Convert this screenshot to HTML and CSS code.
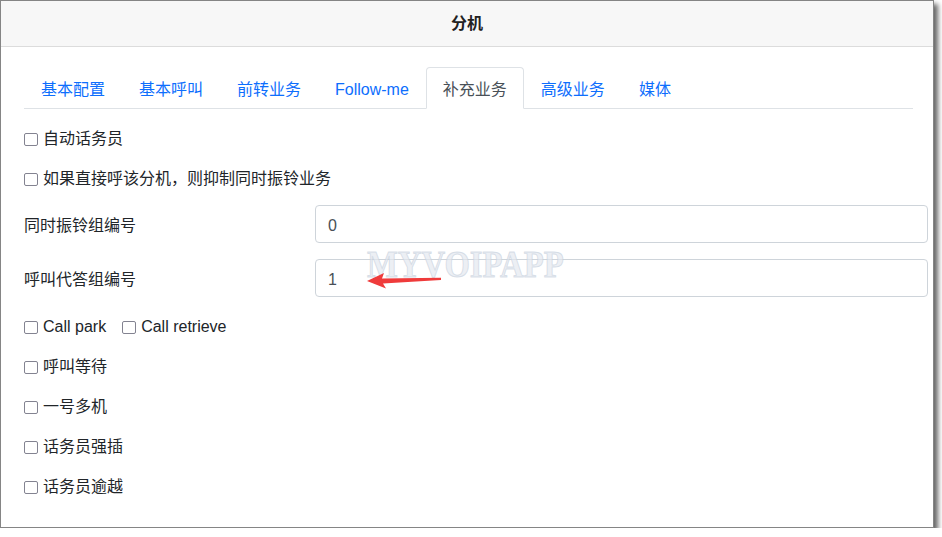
FILE: index.html
```
<!DOCTYPE html>
<html lang="zh-CN">
<head>
<meta charset="utf-8">
<title>分机</title>
<link rel="stylesheet" href="styles.css">
</head>
<body>
<div class="modal">
  <div class="modal-header"><h5 class="modal-title">分机</h5></div>
  <div class="modal-body">
    <ul class="tabs">
      <li><a class="tab">基本配置</a></li>
      <li><a class="tab">基本呼叫</a></li>
      <li><a class="tab">前转业务</a></li>
      <li><a class="tab">Follow-me</a></li>
      <li><a class="tab active">补充业务</a></li>
      <li><a class="tab">高级业务</a></li>
      <li><a class="tab">媒体</a></li>
    </ul>
    <div class="tab-content">
      <div class="check-row"><label class="check"><span class="box"></span>自动话务员</label></div>
      <div class="check-row"><label class="check"><span class="box"></span>如果直接呼该分机，则抑制同时振铃业务</label></div>
      <div class="form-row first">
        <label class="form-label">同时振铃组编号</label>
        <div class="field"><input class="form-control" type="text" value="0"></div>
      </div>
      <div class="form-row second">
        <label class="form-label">呼叫代答组编号</label>
        <div class="field">
          <input class="form-control" type="text" value="1">
          <span class="watermark">MYVOIPAPP</span>
          <svg class="arrow" width="140" height="38" viewBox="0 0 140 38">
            <polygon points="52,22 69,14 67,19.6 126,18.8 126,21 68,24.4 71,29.5" fill="#ef3b3b"/>
          </svg>
        </div>
      </div>
      <div class="check-row after-form">
        <label class="check"><span class="box"></span>Call park</label>
        <label class="check"><span class="box"></span>Call retrieve</label>
      </div>
      <div class="check-row"><label class="check"><span class="box"></span>呼叫等待</label></div>
      <div class="check-row"><label class="check"><span class="box"></span>一号多机</label></div>
      <div class="check-row"><label class="check"><span class="box"></span>话务员强插</label></div>
      <div class="check-row"><label class="check"><span class="box"></span>话务员逾越</label></div>
    </div>
  </div>
</div>
</body>
</html>
```
FILE: styles.css
```
* { box-sizing: border-box; }
html, body {
  margin: 0;
  padding: 0;
  background: #ffffff;
}
body {
  font-family: "Liberation Sans", "Noto Sans CJK SC", sans-serif;
  font-size: 16px;
  line-height: 24px;
  color: #212529;
}
.modal {
  width: 934px;
  height: 528px;
  border: 1px solid #858585;
  background: #ffffff;
  box-shadow: 4px 4px 5px rgba(0, 0, 0, 0.6);
  overflow: hidden;
}
.modal-header {
  height: 46px;
  background: #f7f7f7;
  border-bottom: 1px solid #dcdcdc;
  display: flex;
  align-items: center;
  justify-content: center;
}
.modal-title {
  margin: 0;
  font-size: 16px;
  font-weight: 700;
  line-height: 24px;
  color: #222222;
}
.modal-body {
  padding: 20px 5px 0 23px;
}
.tabs {
  list-style: none;
  margin: 0 15px 0 0;
  padding: 0;
  display: flex;
  border-bottom: 1px solid #dee2e6;
}
.tabs li {
  margin-bottom: -1px;
}
.tab {
  display: block;
  padding: 10px 16px 6px;
  line-height: 24px;
  border: 1px solid transparent;
  border-radius: 4px 4px 0 0;
  color: #0d6efd;
  cursor: pointer;
}
.tab.active {
  color: #495057;
  background: #ffffff;
  border-color: #dee2e6 #dee2e6 #ffffff;
}
.tab-content {
  padding-top: 9px;
}
.check-row {
  height: 40px;
  padding-top: 2px;
  display: flex;
  align-items: center;
  gap: 16px;
}
.check-row.after-form {
  margin-top: 9px;
}
.check {
  display: flex;
  align-items: center;
  cursor: pointer;
}
.box {
  display: inline-block;
  width: 14px;
  height: 13px;
  border: 1.5px solid #838391;
  border-radius: 2px;
  background: #ffffff;
  margin-right: 5px;
}
.form-row {
  display: grid;
  grid-template-columns: 291px 1fr;
  align-items: center;
}
.form-row.first {
  margin-top: 7px;
}
.form-row.second {
  margin-top: 16px;
}
.form-label {
  line-height: 24px;
  padding-top: 4px;
}
.field {
  position: relative;
}
.form-control {
  display: block;
  width: 100%;
  height: 38px;
  padding: 3px 12px 0;
  border: 1px solid #ced4da;
  border-radius: 4px;
  font-family: "Liberation Sans", "Noto Sans CJK SC", sans-serif;
  font-size: 16px;
  color: #495057;
  background: #ffffff;
  outline: none;
}
.watermark {
  position: absolute;
  left: 52px;
  top: -14px;
  font-family: "Liberation Serif", serif;
  font-weight: 700;
  font-size: 38px;
  line-height: 38px;
  color: rgba(228, 233, 240, 0.7);
  -webkit-text-stroke: 1px rgba(195, 205, 218, 0.6);
  transform: scaleX(0.86);
  transform-origin: left top;
  pointer-events: none;
  white-space: nowrap;
}
.arrow {
  position: absolute;
  left: 0;
  top: 0;
  pointer-events: none;
}
```
